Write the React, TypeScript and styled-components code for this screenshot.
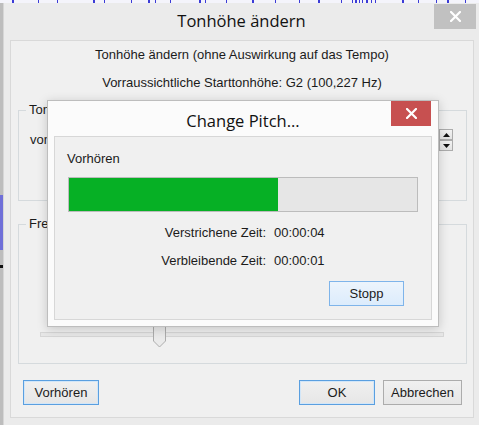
import React from 'react';
import styled, { createGlobalStyle } from 'styled-components';

const Global = createGlobalStyle`
  html, body { margin: 0; padding: 0; }
  body {
    width: 479px;
    height: 425px;
    overflow: hidden;
    background: #c3c3c3;
    font-family: "Liberation Sans", Arial, sans-serif;
    font-size: 13px;
    color: #1b1b1b;
  }
  * { box-sizing: border-box; }
`;

const Desktop = styled.div`
  width: 479px;
  height: 425px;
  display: grid;
  grid-template-columns: 3px 476px;
  grid-template-rows: 3px 422px;
  overflow: hidden;
`;

const WaveStrip = styled.svg`
  grid-column: 1 / span 2;
  display: block;
  background: #f4f4fb;
`;

const Gutter = styled.svg`
  display: block;
  background: #bdbdbd;
`;

const Window = styled.div`
  position: relative;
  background: #ebebeb;
  border-left: 1px solid #d6d6d6;
  display: flex;
  flex-direction: column;
`;

const TitleBar = styled.div<{ $side: number; $h: number }>`
  display: grid;
  grid-template-columns: ${p => p.$side}px 1fr ${p => p.$side}px;
  height: ${p => p.$h}px;
  align-items: start;
  flex: none;
`;

const Title = styled.div<{ $top: number }>`
  grid-column: 2;
  text-align: center;
  font-family: "Open Sans", "Noto Sans", sans-serif;
  font-size: 16.5px;
  line-height: 22px;
  color: #111;
  margin-top: ${p => p.$top}px;
  white-space: nowrap;
`;

const CloseBtn = styled.div<{ $red?: boolean; $top: number; $right: number }>`
  grid-column: 3;
  justify-self: end;
  width: ${p => (p.$red ? 40 : 42)}px;
  height: 25px;
  margin-top: ${p => p.$top}px;
  margin-right: ${p => p.$right}px;
  background: ${p => (p.$red ? '#c75050' : '#c1c1c1')};
  display: flex;
  align-items: center;
  justify-content: center;
`;

const Client = styled.div`
  margin: 0 5px 7px 6px;
  height: 378px;
  border: 1px solid #d9d9d9;
  background: #f0f0f0;
  display: flex;
  flex-direction: column;
  padding-top: 6px;
`;

const CenterLine = styled.div<{ $gap?: number }>`
  text-align: center;
  line-height: 16px;
  height: 16px;
  margin-top: ${p => p.$gap ?? 0}px;
  white-space: nowrap;
`;

const Group = styled.fieldset<{ $gap: number; $h: number }>`
  margin: ${p => p.$gap}px 6px 0 7px;
  padding: 0;
  min-width: 0;
  height: ${p => p.$h}px;
  border: 1px solid #d5dadd;
  display: flex;
  flex-direction: column;
`;

const Legend = styled.legend`
  margin-left: 7px;
  padding: 0 3px;
  line-height: 16px;
  font-size: 13px;
  white-space: nowrap;
`;

const PitchRow = styled.div`
  display: flex;
  align-items: center;
  height: 22px;
  margin: 11px 13px 0 11px;
  gap: 6px;
`;

const RowLabel = styled.span`
  line-height: 16px;
`;

const TextField = styled.div`
  flex: 1;
  height: 22px;
  border: 1px solid #abadb3;
  background: #fff;
`;

const Spin = styled.div`
  display: flex;
  flex-direction: column;
  width: 14px;
  height: 22px;
`;

const SpinBtn = styled.div`
  flex: 1;
  border: 1px solid #acacac;
  background: linear-gradient(#f2f2f2, #e3e3e3);
  display: flex;
  align-items: center;
  justify-content: center;
`;

const Slider = styled.div`
  position: relative;
  height: 26px;
  margin: 90px 22px 0 21px;
`;

const Track = styled.div`
  margin-top: 10px;
  height: 5px;
  border: 1px solid #d6d6d6;
  background: #e7e7e7;
`;

const Thumb = styled.svg`
  position: absolute;
  left: 113px;
  top: 0;
`;

const ButtonRow = styled.div`
  display: flex;
  align-items: center;
  margin: 16px 11px 0 12px;
  gap: 8px;
`;

const Spacer = styled.div`
  flex: 1;
`;

const Button = styled.button<{ $w: number; $variant?: 'focus' | 'hover' }>`
  width: ${p => p.$w}px;
  height: 25px;
  padding: 0;
  font-family: "Liberation Sans", Arial, sans-serif;
  font-size: 13px;
  color: #1b1b1b;
  border: 1px solid
    ${p => (p.$variant === 'focus' ? '#5a9fe0' : p.$variant === 'hover' ? '#7eb4ea' : '#acacac')};
  background: ${p =>
    p.$variant === 'hover'
      ? 'linear-gradient(#ecf4fc, #dcecfc)'
      : 'linear-gradient(#f0f0f0, #e6e6e6)'};
  box-shadow: ${p => (p.$variant === 'focus' ? 'inset 0 0 0 1px #d2e6f8' : 'none')};
`;

const Modal = styled.div`
  position: absolute;
  left: 43px;
  top: 97px;
  width: 392px;
  height: 227px;
  background: #fbfbfb;
  border: 1px solid #bdbdbd;
  box-shadow: 0 2px 10px rgba(0, 0, 0, 0.18);
  display: flex;
  flex-direction: column;
`;

const ModalBody = styled.div`
  flex: 1;
  margin: 0 6px 6px 6px;
  border: 1px solid #d7d7d7;
  background: #f0f0f0;
  display: flex;
  flex-direction: column;
  padding: 14px 0 0 12px;
`;

const Caption = styled.div`
  line-height: 16px;
`;

const Progress = styled.div`
  margin: 10px 0 0 1px;
  width: 350px;
  height: 35px;
  border: 1px solid #bcbcbc;
  background: #e6e6e6;
  display: flex;
`;

const ProgressFill = styled.div`
  background: #06b025;
  height: 100%;
`;

const TimeGrid = styled.div`
  display: grid;
  grid-template-columns: 199px auto;
  column-gap: 8px;
  row-gap: 12px;
  margin-top: 13px;
  line-height: 16px;
`;

const TimeLabel = styled.div`
  text-align: right;
  white-space: nowrap;
`;

const TimeValue = styled.div`
  white-space: nowrap;
`;

const StopRow = styled.div`
  display: flex;
  justify-content: flex-end;
  margin: 12px 27px 0 0;
`;

const XIcon = () => (
  <svg width="11" height="11" viewBox="0 0 11 11">
    <path d="M1 1 L10 10 M10 1 L1 10" stroke="#fff" strokeWidth="2.2" strokeLinecap="square" />
  </svg>
);

const ArrowUp = () => (
  <svg width="7" height="4" viewBox="0 0 7 4">
    <path d="M0 4 L3.5 0 L7 4 Z" fill="#111" />
  </svg>
);
const ArrowDown = () => (
  <svg width="7" height="4" viewBox="0 0 7 4">
    <path d="M0 0 L7 0 L3.5 4 Z" fill="#111" />
  </svg>
);

const waveTicks = [
  12, 38, 57, 93, 104, 131, 148, 155, 170, 199, 205, 226, 252, 275, 299, 318, 341, 352, 355, 359, 362,
  366, 371, 375, 402, 418, 436, 447, 465,
];

export default function App() {
  const progress = 60;
  return (
    <>
      <Global />
      <Desktop>
        <WaveStrip width="479" height="3" viewBox="0 0 479 3">
          {waveTicks.map((x, i) => (
            <rect key={i} x={x} y={0} width={i % 3 === 0 ? 2 : 1} height={3} fill="#3b3bd6" />
          ))}
        </WaveStrip>
        <Gutter width="3" height="422" viewBox="0 0 3 422">
          <rect x="0" y="192" width="3" height="55" fill="#6f6fd8" />
          <rect x="0" y="262" width="3" height="3" fill="#111" />
        </Gutter>
        <Window>
          <TitleBar $side={45} $h={37}>
            <Title $top={7}>Tonhöhe ändern</Title>
            <CloseBtn $top={1} $right={3}>
              <XIcon />
            </CloseBtn>
          </TitleBar>
          <Client>
            <CenterLine>Tonhöhe ändern (ohne Auswirkung auf das Tempo)</CenterLine>
            <CenterLine $gap={12}>Vorraussichtliche Starttonhöhe: G2 (100,227 Hz)</CenterLine>
            <Group $gap={11} $h={99}>
              <Legend>Tonhöhe</Legend>
              <PitchRow>
                <RowLabel>von</RowLabel>
                <TextField />
                <Spin>
                  <SpinBtn>
                    <ArrowUp />
                  </SpinBtn>
                  <SpinBtn>
                    <ArrowDown />
                  </SpinBtn>
                </Spin>
              </PitchRow>
            </Group>
            <Group $gap={15} $h={148}>
              <Legend>Frequenz</Legend>
              <Slider>
                <Track />
                <Thumb width="13" height="26" viewBox="0 0 13 26">
                  <path d="M0.5 0.5 H12.5 V19 L6.5 25 L0.5 19 Z" fill="#eaeaea" stroke="#acacac" />
                </Thumb>
              </Slider>
            </Group>
            <ButtonRow>
              <Button $w={76} $variant="focus">Vorhören</Button>
              <Spacer />
              <Button $w={76} $variant="focus">OK</Button>
              <Button $w={79}>Abbrechen</Button>
            </ButtonRow>
          </Client>
          <Modal>
            <TitleBar $side={47} $h={35}>
              <Title $top={9}>Change Pitch...</Title>
              <CloseBtn $red $top={0} $right={7}>
                <XIcon />
              </CloseBtn>
            </TitleBar>
            <ModalBody>
              <Caption>Vorhören</Caption>
              <Progress>
                <ProgressFill style={{ width: `${progress}%` }} />
              </Progress>
              <TimeGrid>
                <TimeLabel>Verstrichene Zeit:</TimeLabel>
                <TimeValue>00:00:04</TimeValue>
                <TimeLabel>Verbleibende Zeit:</TimeLabel>
                <TimeValue>00:00:01</TimeValue>
              </TimeGrid>
              <StopRow>
                <Button $w={75} $variant="hover">Stopp</Button>
              </StopRow>
            </ModalBody>
          </Modal>
        </Window>
      </Desktop>
    </>
  );
}
